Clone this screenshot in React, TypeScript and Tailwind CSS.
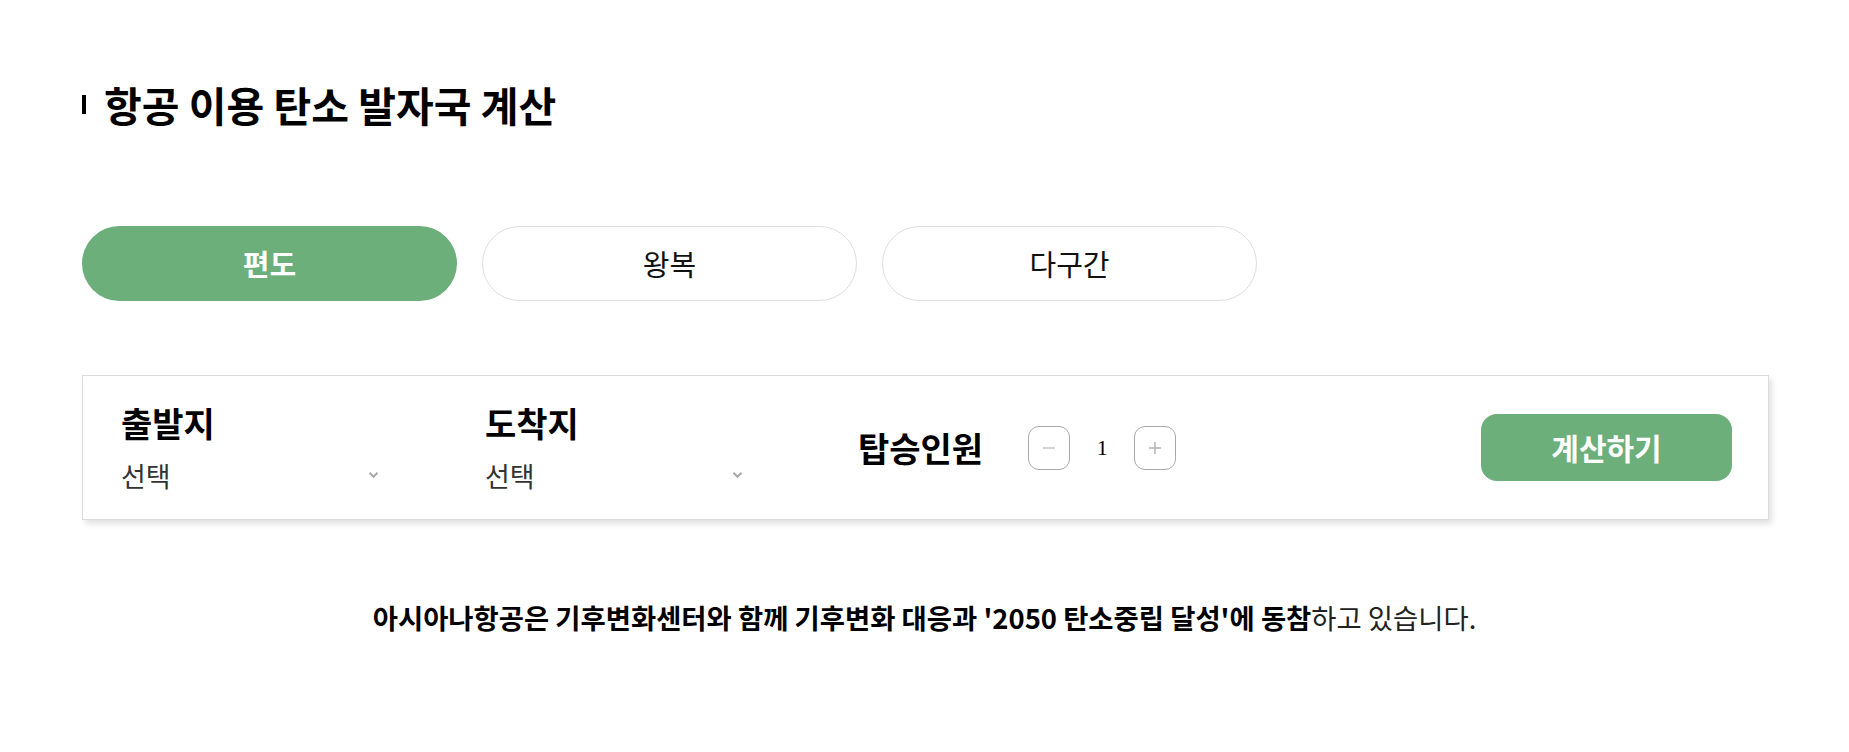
import React from "react";

const font = { fontFamily: '"Noto Sans CJK KR", "Noto Sans", sans-serif' };

function Chevron() {
  return (
    <svg width="11" height="8" viewBox="0 0 11 8" fill="none">
      <path d="M1.5 1.8 L5.5 5.8 L9.5 1.8" stroke="#a8a8a8" strokeWidth="2" />
    </svg>
  );
}

function SelectCol({ label }: { label: string }) {
  return (
    <div className="flex w-[258px] flex-col">
      <div className="text-[34px] font-bold leading-[44px] text-black">{label}</div>
      <div className="mt-[13px] flex items-center justify-between">
        <span className="text-[27px] leading-[36px] text-[#333]">선택</span>
        <span className="mt-[-2px]">
          <Chevron />
        </span>
      </div>
    </div>
  );
}

export default function App() {
  return (
    <div className="min-h-[752px] w-full bg-white" style={font}>
      <div className="px-[82px] pt-[76px]">
        <div className="flex items-center">
          <span className="mr-[18px] mt-[1px] inline-block h-[19px] w-[4px] bg-black" />
          <h1 className="text-[41px] font-bold leading-[56px] text-black">
            항공 이용 탄소 발자국 계산
          </h1>
        </div>

        <div className="mt-[94px] flex gap-[25px]">
          <button className="flex h-[75px] w-[375px] items-center justify-center rounded-full bg-[#6caf7b] text-[29px] font-bold text-white">
            편도
          </button>
          <button className="flex h-[75px] w-[375px] items-center justify-center rounded-full border border-[#dddddd] bg-white text-[29px] text-[#111]">
            왕복
          </button>
          <button className="flex h-[75px] w-[375px] items-center justify-center rounded-full border border-[#dddddd] bg-white text-[29px] text-[#111]">
            다구간
          </button>
        </div>

        <div className="mt-[74px] flex h-[145px] w-[1687px] items-center border border-[#dcdcdc] bg-white pl-[38px] pr-[36px] shadow-[3px_4px_6px_rgba(0,0,0,0.12)]">
          <SelectCol label="출발지" />
          <div className="w-[106px]" />
          <SelectCol label="도착지" />
          <div className="ml-[115px] flex items-center">
            <span className="text-[34px] font-bold leading-[44px] text-black">탑승인원</span>
            <div className="ml-[45px] flex items-center">
              <button className="flex h-[44px] w-[42px] items-center justify-center rounded-[11px] border border-[#a9a9a9] bg-white">
                <svg width="16" height="16" viewBox="0 0 16 16">
                  <path d="M2 8 H14" stroke="#c4c4c4" strokeWidth="1.5" />
                </svg>
              </button>
              <span
                className="w-[64px] text-center text-[22px] leading-none text-black"
                style={{ fontFamily: '"Liberation Serif", serif' }}
              >
                1
              </span>
              <button className="flex h-[44px] w-[42px] items-center justify-center rounded-[11px] border border-[#a9a9a9] bg-white">
                <svg width="16" height="16" viewBox="0 0 16 16">
                  <path d="M2 8 H14 M8 2 V14" stroke="#b4b4b4" strokeWidth="1.5" />
                </svg>
              </button>
            </div>
          </div>
          <div className="flex-1" />
          <button className="flex h-[67px] w-[251px] items-center justify-center rounded-[16px] bg-[#6caf7b] text-[30px] font-bold text-white">
            계산하기
          </button>
        </div>
      </div>

      <p className="mt-[78px] text-center text-[27.4px] leading-[38px] text-[#222]">
        <span className="font-bold text-black">
          아시아나항공은 기후변화센터와 함께 기후변화 대응과 '2050 탄소중립 달성'에 동참
        </span>
        하고 있습니다.
      </p>
    </div>
  );
}
